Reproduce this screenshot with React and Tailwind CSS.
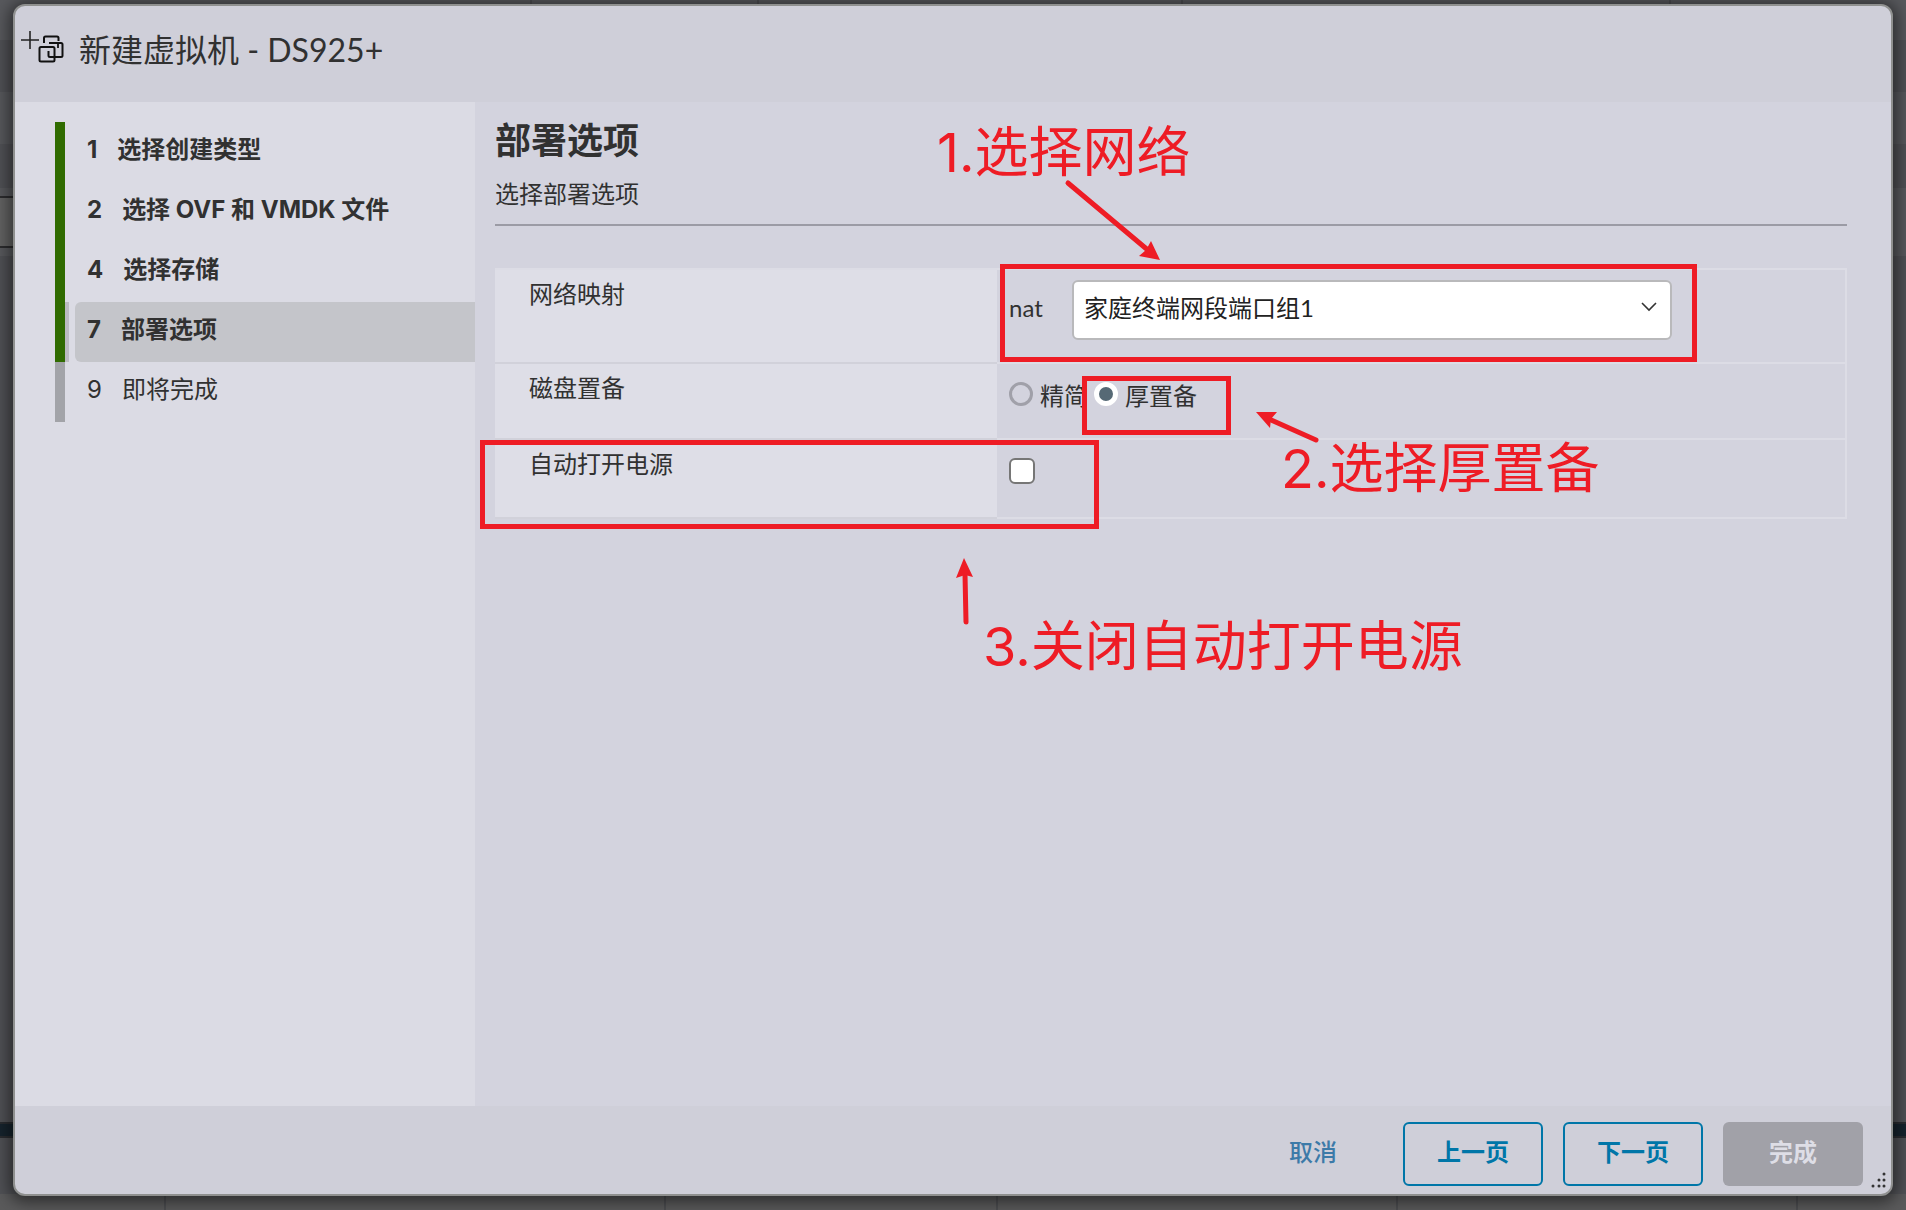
import { useState } from "react";

const steps = [
  { id: 1, label: "选择创建类型", state: "done" },
  { id: 2, label: "选择 OVF 和 VMDK 文件", state: "done" },
  { id: 4, label: "选择存储", state: "done" },
  { id: 7, label: "部署选项", state: "active" },
  { id: 9, label: "即将完成", state: "todo" },
];

function VmIcon() {
  return (
    <svg width="44" height="36" viewBox="0 0 44 36" fill="none" stroke="#111" strokeWidth="2" aria-hidden="true">
      <path d="M0 10H18M9 1V19" strokeWidth="1.6" stroke="#222" />
      <path d="M23 13V8a1.500 1.500 0 0 1 1.500-1.500H36a1.500 1.500 0 0 1 1.500 1.500V11" />
      <path d="M28 13H40a1.500 1.500 0 0 1 1.500 1.500V25.500a1.500 1.500 0 0 1-1.500 1.500H29a1.500 1.500 0 0 1-1.500-1.500V21" />
      <path d="M37 13V18" strokeWidth="1.8" />
      <rect x="18.500" y="17" width="15" height="14.500" rx="1.500" />
    </svg>
  );
}

// dimmed host page behind the dialog
function Backdrop() {
  return (
    <div className="absolute inset-0 flex flex-col bg-[#505155]" aria-hidden="true">
      <div className="flex h-10 bg-[#58595d]">
        <div className="w-[532px] border-r-2 border-[#4c4d50]" />
        <div className="w-[227px] border-r-2 border-[#4c4d50]" />
        <div className="w-[424px] border-r-2 border-[#4c4d50]" />
        <div className="w-[488px] border-r-2 border-[#4c4d50]" />
      </div>
      <div className="h-13 bg-[#505155]" />
      <div className="h-13 bg-[#57585c]" />
      <div className="h-11 bg-[#505155]" />
      <div className="flex h-17 bg-[#58595d] pt-2">
        <div className="h-13 w-10 border-y-2 border-[#2c2c2e] bg-[#636363]" />
      </div>
      <div className="flex-1" />
      <div className="h-4 border-y-2 border-[#2a2c30] bg-[#16232d]" />
      <div className="h-14 bg-[#505155]" />
      <div className="flex h-4 bg-[#5a5a5b]">
        <div className="w-[166px] border-r-2 border-[#4c4d50]" />
        <div className="w-[500px] border-r-2 border-[#4c4d50]" />
        <div className="w-[332px] border-r-2 border-[#4c4d50]" />
        <div className="w-[400px] border-r-2 border-[#4c4d50]" />
        <div className="w-[400px] border-r-2 border-[#4c4d50]" />
      </div>
    </div>
  );
}

function StepNav() {
  return (
    <nav className="w-[460px] shrink-0 bg-[#dbdbe4] pt-5 pl-10 font-[Inter,'Noto_Sans_CJK_SC',sans-serif]">
      <ol>
        {steps.map((s) => (
          <li key={s.id} className="flex h-15 text-2xl">
            <span className={s.state === "todo" ? "w-[10px] bg-[#a2a3a8]" : "w-[10px] bg-[#306b00]"} />
            <span className={s.state === "active" ? "mr-[6px] w-1 bg-[#bbbbc0]" : "mr-[6px] w-1"} />
            <a
              href="#"
              aria-current={s.state === "active" ? "step" : undefined}
              className={
                s.state === "active"
                  ? "flex flex-1 items-center gap-5 rounded-l-md bg-[#c4c5ca] pb-1 pl-3 font-bold"
                  : s.state === "done"
                    ? "flex flex-1 items-center gap-5 pb-1 pl-3 font-bold"
                    : "flex flex-1 items-center gap-5 pb-1 pl-3"
              }
            >
              <span>{s.id}</span>
              <span>{s.label}</span>
            </a>
          </li>
        ))}
      </ol>
    </nav>
  );
}

function Row({ label, htmlFor, className, children }) {
  return (
    <div className="flex">
      <div className="w-[502px] shrink-0 border-b-2 border-[#d1d1da] bg-[#dedee7] pt-1 pl-[34px]">
        <label htmlFor={htmlFor} className="leading-10">
          {label}
        </label>
      </div>
      <div className={`flex-1 border-r-2 border-b-2 border-[#dcdce5] pl-3 ${className}`}>{children}</div>
    </div>
  );
}

function Notes() {
  return (
    <div className="pointer-events-none absolute inset-0 font-[Inter,'Noto_Sans_CJK_SC',sans-serif] text-[54px] leading-none text-[#ee1c25]">
      <div className="absolute top-[162px] left-[525px] h-[98px] w-[697px] border-5 border-[#ee1c25]" />
      <div className="absolute top-[274px] left-[607px] h-[59px] w-[149px] border-5 border-[#ee1c25]" />
      <div className="absolute top-[338px] left-[5px] h-[89px] w-[619px] border-5 border-[#ee1c25]" />
      <p className="absolute top-6 left-[462px] whitespace-nowrap">1.选择网络</p>
      <p className="absolute top-[340px] left-[806px] whitespace-nowrap">2.选择厚置备</p>
      <p className="absolute top-[518px] left-[508px] whitespace-nowrap">3.关闭自动打开电源</p>
      <svg
        className="absolute top-0 left-0"
        width="900"
        height="540"
        viewBox="0 0 900 540"
        fill="#ee1c25"
        stroke="#ee1c25"
        strokeLinecap="round"
      >
        <path d="M593 81L674 149" strokeWidth="5" />
        <path d="M685 158L664 154L671 148L676 139Z" stroke="none" />
        <path d="M841 338L794 317" strokeWidth="5" />
        <path d="M781 310L802 310L796 317L795 326Z" stroke="none" />
        <path d="M491 520L490 472" strokeWidth="5" />
        <path d="M489 456L498 475L490 473L481 476Z" stroke="none" />
      </svg>
    </div>
  );
}

function App() {
  const [network, setNetwork] = useState("家庭终端网段端口组1");
  const [disk, setDisk] = useState("thick");
  const [powerOn, setPowerOn] = useState(false);

  const radioClass =
    "mt-1 size-6 shrink-0 appearance-none rounded-full border-3 border-[#a0a0a9] checked:border-5 checked:border-white checked:bg-[#566975]";
  const buttonClass = "h-16 w-35 rounded-md border-2 border-[#0076a8] pb-1 font-bold text-[#0076a8]";

  return (
    <div className="relative flex h-screen overflow-hidden pt-1 pr-[13px] pb-[14px] pl-[13px] font-[Lato,'Noto_Sans_CJK_SC',sans-serif] text-2xl text-[#313131]">
      <Backdrop />
      <div
        role="dialog"
        aria-labelledby="title"
        className="relative flex min-w-0 flex-1 flex-col overflow-hidden rounded-xl border-2 border-[#8f908f] bg-[#cfcfd9] shadow-[0_2px_16px_4px_rgba(0,0,0,0.5)]"
      >
        <header className="flex h-24 shrink-0 items-start pt-5 pl-[6px]">
          <span className="pt-1">
            <VmIcon />
          </span>
          <h1 id="title" className="pl-[14px] text-[32px] leading-12">
            新建虚拟机 - DS925+
          </h1>
        </header>

        <div className="flex min-h-0 flex-1">
          <StepNav />
          <main className="relative min-w-0 flex-1 bg-[#d3d3de] pt-[14px] pr-11 pl-5">
            <h2 className="text-4xl leading-12 font-bold">部署选项</h2>
            <p className="border-b-2 border-[#9b9ba5] pt-3 pb-3 leading-9">选择部署选项</p>

            <form className="mt-[42px] border-t-2 border-[#dcdce5]">
              <Row label="网络映射" htmlFor="network" className="h-[94px] pt-[10px]">
                <div className="flex items-center">
                  <span className="w-[63px] pb-1">nat</span>
                  <div className="relative w-[600px]">
                    <select
                      id="network"
                      value={network}
                      onChange={(e) => setNetwork(e.target.value)}
                      className="h-15 w-full appearance-none rounded-md border-2 border-[#b9b9bb] bg-white pb-1 pl-[10px] text-[#222]"
                    >
                      <option>家庭终端网段端口组1</option>
                    </select>
                    <svg
                      className="pointer-events-none absolute top-5 right-[14px]"
                      width="18"
                      height="14"
                      viewBox="0 0 18 14"
                      fill="none"
                      stroke="#333"
                      strokeWidth="1.6"
                    >
                      <path d="M2 3L9 10L16 3" />
                    </svg>
                  </div>
                </div>
              </Row>
              <Row label="磁盘置备" className="h-[76px] pt-[14px]">
                <div className="flex items-start">
                  <input
                    id="thin"
                    type="radio"
                    name="disk"
                    checked={disk === "thin"}
                    onChange={() => setDisk("thin")}
                    className={radioClass}
                  />
                  <label htmlFor="thin" className="pl-[7px] leading-9">
                    精简
                  </label>
                  <input
                    id="thick"
                    type="radio"
                    name="disk"
                    checked={disk === "thick"}
                    onChange={() => setDisk("thick")}
                    className={`ml-[6px] ${radioClass}`}
                  />
                  <label htmlFor="thick" className="pl-[7px] leading-9">
                    厚置备
                  </label>
                </div>
              </Row>
              <Row label="自动打开电源" htmlFor="power" className="h-[79px] pt-[18px]">
                <input
                  id="power"
                  type="checkbox"
                  checked={powerOn}
                  onChange={(e) => setPowerOn(e.target.checked)}
                  className="block size-[26px] appearance-none rounded-md border-2 border-[#767676] bg-white checked:bg-[#566975]"
                />
              </Row>
            </form>
            <Notes />
          </main>
        </div>

        <footer className="relative flex h-22 shrink-0 items-start justify-end gap-5 pt-4 pr-7">
          <button type="button" className="h-16 px-[46px] pb-1 font-medium text-[#3c7aa8]">
            取消
          </button>
          <button type="button" className={buttonClass}>
            上一页
          </button>
          <button type="button" className={buttonClass}>
            下一页
          </button>
          <button type="button" disabled className="h-16 w-35 rounded-md bg-[#a1a1a8] pb-1 font-bold text-[#dedee6]">
            完成
          </button>
          <svg className="absolute right-1 bottom-1" width="18" height="18" viewBox="0 0 18 18" fill="#333">
            <circle cx="15" cy="2" r="1.500" />
            <circle cx="10" cy="8" r="1.500" />
            <circle cx="15" cy="8" r="1.500" />
            <circle cx="4" cy="14" r="1.500" />
            <circle cx="10" cy="14" r="1.500" />
            <circle cx="15" cy="14" r="1.500" />
          </svg>
        </footer>
      </div>
    </div>
  );
}

export default App;
